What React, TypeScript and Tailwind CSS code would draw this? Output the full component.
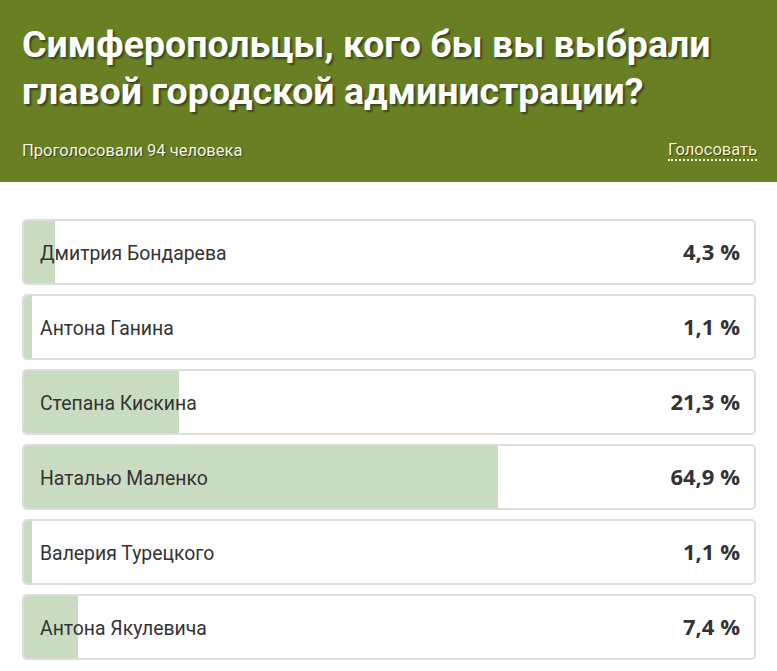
import React from 'react'

const results = [
  { name: 'Дмитрия Бондарева', value: 4.3 },
  { name: 'Антона Ганина', value: 1.1 },
  { name: 'Степана Кискина', value: 21.3 },
  { name: 'Наталью Маленко', value: 64.9 },
  { name: 'Валерия Турецкого', value: 1.1 },
  { name: 'Антона Якулевича', value: 7.4 },
]

export default function App() {
  return (
    <section className="w-[777px] h-[671px] overflow-hidden bg-white font-['Roboto',sans-serif]">
      <header className="bg-[#687f24] h-[182px] pl-[22px] pr-[20px] pt-[21px] text-white">
        <h1 className="text-[37.5px] leading-[47px] font-bold [text-shadow:2px_2px_2px_rgba(0,0,0,0.45)]">
          Симферопольцы, кого бы вы выбрали главой городской администрации?
        </h1>
        <div className="flex justify-between items-center mt-[24px] text-[16.5px] text-[#f4f4e2] [text-shadow:1px_1px_1px_rgba(0,0,0,0.5)]">
          <span>Проголосовали 94 человека</span>
          <a className="text-[#f6f1cc] border-b-2 border-dotted border-[#f6f1cc] leading-[18px] cursor-pointer">Голосовать</a>
        </div>
      </header>

      <div className="pl-[22px] pr-[21px] pt-[37px] flex flex-col gap-[9px]">
        {results.map((r, i) => <ResultRow key={i} name={r.name} value={r.value} />)}
      </div>
    </section>
  )
}

const ResultRow = ({ name, value }: { name: string; value: number }) => {
  return (
    <article className="relative h-[66px] border-2 border-[#dddddd] rounded-[5px] overflow-hidden flex items-center justify-between pl-4 pr-[14px]">
      <div className="absolute left-0 top-0 bottom-0 bg-[#c9dbc1]" style={{ width: `${value}%` }} />
      <span className="relative top-[2px] text-[19.4px] text-[#333]">{name}</span>
      <span className="relative -top-[1px] text-[22px] font-bold text-[#333] font-['Open_Sans',sans-serif]">
        {value.toString().replace('.', ',')} %
      </span>
    </article>
  )
}
